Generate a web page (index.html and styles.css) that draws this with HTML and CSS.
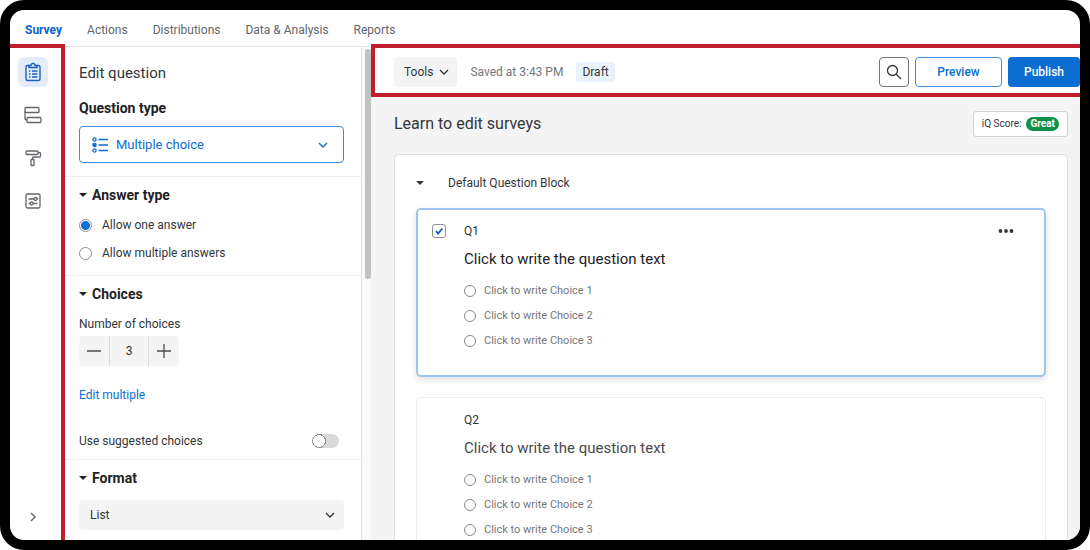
FILE: index.html
```
<!DOCTYPE html>
<html lang="en">
<head>
    <meta charset="UTF-8">
    <meta name="viewport" content="width=device-width, initial-scale=1.0">
    <title>Learn to edit surveys</title>
    <link rel="stylesheet" href="styles.css">
</head>
<body>
    <div class="screen">
        <nav class="tabs">
            <a class="active" href="#survey">Survey</a>
            <a href="#actions">Actions</a>
            <a href="#distributions">Distributions</a>
            <a href="#data">Data &amp; Analysis</a>
            <a href="#reports">Reports</a>
        </nav>

        <div class="workspace">
            <div class="rail">
                <button class="rail-button selected" type="button" aria-label="Survey builder">
                    <svg width="18" height="20" viewBox="0 0 18 20" fill="none" stroke="currentColor" stroke-width="1.4">
                        <path d="M5 3.5H3.5a1.5 1.5 0 0 0-1.5 1.5v12a1.5 1.5 0 0 0 1.5 1.5h11a1.5 1.5 0 0 0 1.5-1.5V5a1.5 1.5 0 0 0-1.5-1.5H13"/>
                        <path d="M5 5.5V3.5h2a2 2 0 0 1 4 0h2v2z"/>
                        <path d="M5 9h1.5M8 9h5.5M5 12h1.5M8 12h5.5M5 15h1.5M8 15h5.5"/>
                    </svg>
                </button>
                <button class="rail-button" type="button" aria-label="Survey flow">
                    <svg width="18" height="18" viewBox="0 0 18 18" fill="none" stroke="currentColor" stroke-width="1.3">
                        <rect x="1" y="1.5" width="14" height="5" rx="1"/>
                        <rect x="3" y="11.5" width="14" height="5" rx="1"/>
                        <path d="M1 5.500V12a2 2 0 0 0 2 2"/>
                    </svg>
                </button>
                <button class="rail-button" type="button" aria-label="Look and feel">
                    <svg width="18" height="18" viewBox="0 0 18 18" fill="none" stroke="currentColor" stroke-width="1.3">
                        <rect x="2" y="2" width="12" height="3.5" rx="1"/>
                        <path d="M14 3.5h1.5a1 1 0 0 1 1 1V7a1 1 0 0 1-1 1H9.5a1 1 0 0 0-1 1v1.5"/>
                        <rect x="7" y="10.5" width="3" height="6" rx=".6"/>
                    </svg>
                </button>
                <button class="rail-button" type="button" aria-label="Survey options">
                    <svg width="18" height="18" viewBox="0 0 18 18" fill="none" stroke="currentColor" stroke-width="1.3">
                        <rect x="2" y="2" width="14" height="14" rx="1.5"/>
                        <path d="M4.5 7H10M4.5 11.5H6M9.5 11.5h4"/>
                        <circle cx="11.5" cy="7" r="1.5"/>
                        <circle cx="7.7" cy="11.5" r="1.5"/>
                        <path d="M13 7h1"/>
                    </svg>
                </button>
                <button class="rail-button expand" type="button" aria-label="Expand menu">
                    <svg width="10" height="12" viewBox="0 0 10 12" fill="none" stroke="currentColor" stroke-width="1.4">
                        <path d="M3 2l4 4-4 4"/>
                    </svg>
                </button>
            </div>

            <aside class="panel">
                <section class="question-type">
                    <h1>Edit question</h1>
                    <label class="type-label" for="questionType">Question type</label>
                    <div class="select primary">
                        <svg width="17" height="16" viewBox="0 0 17 16" fill="none" stroke="currentColor" stroke-width="1.3">
                            <circle cx="2.5" cy="2.5" r="1.6"/>
                            <circle cx="2.5" cy="8" r="1.6" fill="currentColor"/>
                            <circle cx="2.5" cy="13.5" r="1.6"/>
                            <path d="M6.5 2.5H16M6.5 8H16M6.5 13.5H16"/>
                        </svg>
                        <select id="questionType">
                            <option>Multiple choice</option>
                        </select>
                        <svg width="10" height="8" viewBox="0 0 10 8" fill="none" stroke="currentColor" stroke-width="1.4">
                            <path d="M1 2l4 4 4-4"/>
                        </svg>
                    </div>
                </section>

                <section class="answer-type">
                    <h2>Answer type</h2>
                    <label class="option"><input type="radio" name="answerType" checked>Allow one answer</label>
                    <label class="option"><input type="radio" name="answerType">Allow multiple answers</label>
                </section>

                <section class="choice-settings">
                    <h2>Choices</h2>
                    <label class="field-label" for="choiceCount">Number of choices</label>
                    <div class="stepper">
                        <button type="button" aria-label="Remove a choice">
                            <svg width="14" height="14" viewBox="0 0 14 14" stroke="currentColor" stroke-width="1.3"><path d="M0 7h14"/></svg>
                        </button>
                        <input type="text" id="choiceCount" value="3">
                        <button type="button" aria-label="Add a choice">
                            <svg width="14" height="14" viewBox="0 0 14 14" stroke="currentColor" stroke-width="1.3"><path d="M0 7h14M7 0v14"/></svg>
                        </button>
                    </div>
                    <a class="edit-multiple" href="#edit">Edit multiple</a>
                    <label class="toggle">Use suggested choices<input type="checkbox"></label>
                </section>

                <section class="format">
                    <h2>Format</h2>
                    <div class="select">
                        <select aria-label="Format">
                            <option>List</option>
                        </select>
                        <svg width="10" height="8" viewBox="0 0 10 8" fill="none" stroke="currentColor" stroke-width="1.3">
                            <path d="M1 2l4 4 4-4"/>
                        </svg>
                    </div>
                </section>
            </aside>

            <div class="scrollbar"><div class="thumb"></div></div>

            <main class="editor">
                <div class="toolbar">
                    <button class="tools" type="button">Tools
                        <svg width="10" height="8" viewBox="0 0 10 8" fill="none" stroke="currentColor" stroke-width="1.3">
                            <path d="M1 2l4 4 4-4"/>
                        </svg>
                    </button>
                    <span class="saved">Saved at 3:43 PM</span>
                    <span class="draft">Draft</span>
                    <button class="search" type="button" aria-label="Search">
                        <svg width="16" height="16" viewBox="0 0 16 16" fill="none" stroke="currentColor" stroke-width="1.3">
                            <circle cx="6.5" cy="6.5" r="5"/>
                            <path d="M10 10l5 5"/>
                        </svg>
                    </button>
                    <button class="preview" type="button">Preview</button>
                    <button class="publish" type="button">Publish</button>
                </div>

                <div class="canvas">
                    <header class="survey-header">
                        <h2>Learn to edit surveys</h2>
                        <button class="score" type="button">iQ Score: <span>Great</span></button>
                    </header>

                    <div class="block">
                        <h3>Default Question Block</h3>

                        <article class="question current">
                            <input class="pick" type="checkbox" aria-label="Select Q1" checked>
                            <div class="question-body">
                                <div class="question-id">Q1</div>
                                <p>Click to write the question text</p>
                                <label><input type="radio" name="q1">Click to write Choice 1</label>
                                <label><input type="radio" name="q1">Click to write Choice 2</label>
                                <label><input type="radio" name="q1">Click to write Choice 3</label>
                            </div>
                            <button class="more" type="button" aria-label="More options">
                                <svg width="16" height="4" viewBox="0 0 16 4" fill="currentColor">
                                    <circle cx="2.5" cy="2" r="1.9"/>
                                    <circle cx="8" cy="2" r="1.9"/>
                                    <circle cx="13.5" cy="2" r="1.9"/>
                                </svg>
                            </button>
                        </article>

                        <article class="question">
                            <div class="question-body">
                                <div class="question-id">Q2</div>
                                <p>Click to write the question text</p>
                                <label><input type="radio" name="q2">Click to write Choice 1</label>
                                <label><input type="radio" name="q2">Click to write Choice 2</label>
                                <label><input type="radio" name="q2">Click to write Choice 3</label>
                            </div>
                        </article>
                    </div>
                </div>
            </main>
        </div>
    </div>
</body>
</html>
```
FILE: styles.css
```
* {
    margin: 0;
    padding: 0;
    box-sizing: border-box;
}

body {
    font-family: Roboto, "Liberation Sans", sans-serif;
    font-size: 12px;
    line-height: 16px;
    color: #32363a;
    background: white;
}

button,
input,
select {
    font: inherit;
    color: inherit;
    border: none;
    background: none;
    appearance: none;
}

button {
    display: flex;
    align-items: center;
    justify-content: center;
    flex-shrink: 0;
    cursor: pointer;
}

svg {
    flex-shrink: 0;
}

a {
    color: #0b6ed0;
    text-decoration: none;
}

/* Device frame */
.screen {
    height: 100vh;
    display: flex;
    flex-direction: column;
    overflow: hidden;
    background: white;
    border: 10px solid black;
    border-radius: 24px;
}

.tabs {
    display: flex;
    gap: 25px;
    height: 34px;
    flex-shrink: 0;
    padding: 4px 15px 0;
    line-height: 32px;
}

.tabs a {
    color: #62666a;
}

.tabs .active {
    color: #0b62d0;
    font-weight: 700;
}

.workspace {
    flex: 1;
    min-height: 0;
    display: flex;
}

/* Left rail */
.rail {
    width: 55px;
    flex-shrink: 0;
    display: flex;
    flex-direction: column;
    gap: 13px;
    padding: 9px 0 8px 8px;
    border-top: 4px solid #c01d2e;
    border-right: 4px solid #c01d2e;
}

.rail-button {
    width: 30px;
    height: 30px;
    border-radius: 6px;
    color: #62666a;
}

.rail-button.selected {
    background: #e4ecf9;
    color: #1a62b8;
}

.rail-button.expand {
    margin-top: auto;
}

/* Question panel */
.panel {
    width: 297px;
    flex-shrink: 0;
    margin-top: 2px;
    overflow: hidden;
    border-top: 1px solid #e6e6e6;
    border-right: 1px solid #e2e2e2;
}

.panel section {
    padding: 0 17px 0 14px;
    border-bottom: 1px solid #ececec;
}

.panel section:last-child {
    border-bottom: none;
}

.panel h1 {
    padding: 16px 0;
    font-size: 15px;
    line-height: 20px;
    font-weight: 400;
}

.type-label {
    display: block;
    margin: 1px 0 10px;
    font-size: 14px;
    font-weight: 700;
    color: #222;
}

.panel .question-type {
    padding-bottom: 13px;
}

.select {
    display: flex;
    align-items: center;
    height: 30px;
    padding: 0 9px 0 11px;
    background: #f4f4f4;
    border-radius: 4px;
}

.select select {
    flex: 1;
    min-width: 0;
    outline: none;
}

.select.primary {
    height: 37px;
    gap: 7px;
    padding: 0 15px 0 12px;
    font-size: 13px;
    color: #0b6ed0;
    background: white;
    border: 1px solid #3e8ddd;
}

.panel h2 {
    display: flex;
    align-items: center;
    gap: 5px;
    padding: 10px 0;
    font-size: 14px;
    font-weight: 700;
    color: #222;
}

.panel h2::before,
.block h3::before {
    content: "";
    border: 4px solid transparent;
    border-top-color: currentColor;
    border-bottom: none;
}

.option {
    display: flex;
    align-items: center;
    gap: 10px;
    height: 28px;
}

.option input {
    width: 13px;
    height: 13px;
    border: 1px solid #89919a;
    border-radius: 50%;
}

.option input:checked {
    background: radial-gradient(circle, #0b6ed0 4px, white 5px);
}

.panel .answer-type {
    padding-bottom: 8px;
}

.answer-type h2 {
    padding-bottom: 8px;
}

.field-label {
    display: block;
    margin: 4px 0;
}

.stepper {
    display: flex;
    width: 100px;
    height: 30px;
    overflow: hidden;
    color: #4a4e52;
    background: #f4f4f4;
    border-radius: 4px;
}

.stepper button {
    width: 30px;
}

.stepper input {
    flex: 1;
    min-width: 0;
    text-align: center;
    color: #32363a;
    border: solid #dcdcdc;
    border-width: 0 1px;
}

.edit-multiple {
    display: block;
    margin: 21px 0 30px;
}

.toggle {
    display: flex;
    align-items: center;
    justify-content: space-between;
    padding-right: 5px;
    margin-bottom: 10px;
}

.toggle input {
    width: 27px;
    height: 14px;
    background: radial-gradient(circle at 7px 7px, white 6px, #89919a 6px, #89919a 7px, #d9d9d9 7px);
    border-radius: 7px;
}

.format h2 {
    padding-bottom: 14px;
}

.scrollbar {
    width: 9px;
    flex-shrink: 0;
    margin-top: 2px;
    padding: 2px 0 0 3px;
    background: #fafafa;
    border-top: 1px solid #e6e6e6;
}

.thumb {
    height: 230px;
    background: #c1c1c1;
    border-radius: 3px;
}

/* Editor */
.editor {
    flex: 1;
    min-width: 0;
    overflow: hidden;
    background: #f4f4f4;
}

.toolbar {
    display: flex;
    align-items: center;
    padding: 9px 0 6px 19px;
    background: white;
    border: solid #c01d2e;
    border-width: 4px 0 4px 4px;
}

.toolbar button {
    height: 30px;
    border-radius: 4px;
}

.toolbar .tools {
    gap: 6px;
    padding: 0 8px 0 10px;
    background: #f4f4f4;
}

.saved {
    margin: 0 13px;
    color: #74777a;
}

.draft {
    padding: 2px 6px;
    background: #ebf2fb;
    border-radius: 3px;
}

.toolbar .search {
    width: 30px;
    margin-left: auto;
    border: 1px solid #74777a;
}

.toolbar .preview {
    width: 87px;
    margin: 0 6px;
    font-weight: 500;
    color: #0b6ed0;
    border: 1px solid #3e8ddd;
}

.toolbar .publish {
    width: 72px;
    font-weight: 500;
    color: white;
    background: #0b6ed0;
}

.canvas {
    padding: 14px 12px 0 23px;
}

.survey-header {
    display: flex;
    align-items: center;
    justify-content: space-between;
    margin-bottom: 17px;
}

.survey-header h2 {
    font-size: 16px;
    font-weight: 400;
}

.score {
    gap: 5px;
    height: 26px;
    padding: 0 8px;
    font-size: 10px;
    background: white;
    border: 1px solid #cfcfcf;
    border-radius: 3px;
}

.score span {
    padding: 0 4px;
    line-height: 14px;
    font-weight: 700;
    color: white;
    background: #0f9148;
    border-radius: 7px;
}

.block {
    padding: 20px 21px;
    background: white;
    border: 1px solid #dedede;
    border-radius: 5px;
}

.block h3 {
    display: flex;
    align-items: center;
    gap: 24px;
    margin-bottom: 17px;
    font-size: 12px;
    font-weight: 400;
}

.question {
    display: flex;
    align-items: flex-start;
    margin-bottom: 20px;
    padding: 14px 30px 22px 47px;
    border: 1px solid #ececec;
    border-radius: 5px;
}

.question.current {
    padding: 13px 30px 22px 14px;
    border: 2px solid #9ec5ee;
    box-shadow: 0 3px 6px rgba(0,0,0,0.12);
}

.pick {
    width: 14px;
    height: 14px;
    margin: 1px 18px 0 0;
    border: 1px solid #89919a;
    border-radius: 3px;
}

.pick:checked {
    background: url("data:image/svg+xml,%3Csvg xmlns='http://www.w3.org/2000/svg' viewBox='0 0 12 12'%3E%3Cpath d='M3 6l2 2.5 4.5-5' fill='none' stroke='%230b62d0' stroke-width='1.8'/%3E%3C/svg%3E") center / 12px no-repeat;
}

.question-body {
    flex: 1;
}

.question p {
    padding: 10px 0 9px;
    font-size: 15px;
    line-height: 20px;
    color: #4a4a4a;
}

.current p {
    color: #222;
}

.question label {
    display: flex;
    align-items: center;
    gap: 8px;
    height: 25px;
    font-size: 11px;
    color: #74777a;
}

.question label input {
    width: 12px;
    height: 12px;
    border: 1px solid #888;
    border-radius: 50%;
}

.more {
    width: 16px;
    height: 16px;
}

@media (max-width: 760px) {
    .panel {
        width: 240px;
    }

    .saved {
        display: none;
    }
}
```
